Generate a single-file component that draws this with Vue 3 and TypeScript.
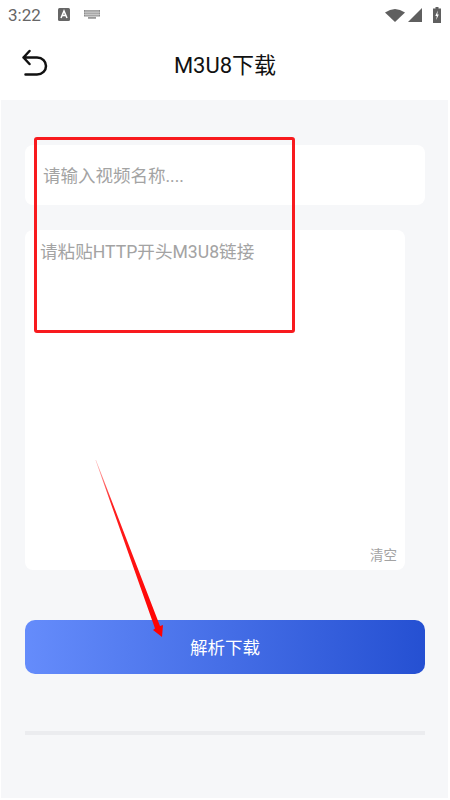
<script setup lang="ts">
const title: string = 'M3U8下载'
</script>

<template>
  <div class="page">
    <div class="status">
      <span class="time">3:22</span>
      <svg class="a-icon" width="12" height="13" viewBox="0 0 12 13">
        <rect x="0" y="0" width="12" height="13" rx="1.500" fill="#666" />
        <path d="M3 10 L6 3 L9 10 M4.200 7.600 H7.800" fill="none" stroke="#fff" stroke-width="1.500" />
      </svg>
      <svg class="kb-icon" width="16" height="9" viewBox="0 0 16 9">
        <rect x="0" y="0" width="16" height="6.500" fill="#8a8a8a" />
        <path d="M2 0V6.500M4 0V6.500M6 0V6.500M8 0V6.500M10 0V6.500M12 0V6.500M14 0V6.500M0 2.200H16M0 4.400H16" stroke="#e4e4e4" stroke-width=".6" />
        <rect x="4" y="7" width="8" height="1.800" fill="#999" />
      </svg>
      <span class="spacer"></span>
      <svg width="20" height="15" viewBox="0 0 20 15">
        <path d="M0 5.500 Q10 -1.500 20 5.500 L10 15 Z" fill="#5f5f5f" />
      </svg>
      <svg class="signal" width="14" height="14" viewBox="0 0 14 14">
        <path d="M14 0 V14 H0 Z" fill="#5f5f5f" />
      </svg>
      <svg class="battery" width="8" height="16" viewBox="0 0 8 16">
        <path d="M2.500 0 H5.500 V1.500 H8 V16 H0 V1.500 H2.500 Z" fill="#5f5f5f" />
        <path d="M4.800 3.500 L2.300 9 H3.800 L3.200 13 L5.800 7.500 H4.300 Z" fill="#fff" />
      </svg>
    </div>

    <header class="nav">
      <svg class="back" width="26" height="27" viewBox="0 0 26 27">
        <path d="M7.500 2 L1.500 8.500 L7.500 15 M1.500 8.500 H15 C20.500 8.500 24 12.500 24 17 C24 21.500 20.500 25.500 15 25.500 H3.500" fill="none" stroke="#111" stroke-width="2.500" stroke-linecap="round" stroke-linejoin="round" />
      </svg>
      <h1 class="title">{{ title }}</h1>
      <span></span>
    </header>

    <main class="content">
      <div class="name-field">请输入视频名称....</div>
      <div class="url-field">
        <div class="url-hint">请粘贴HTTP开头M3U8链接</div>
        <div class="clear">清空</div>
      </div>
      <button class="submit" type="button">解析下载</button>
      <div class="progress"></div>

      <div class="annot-box"></div>
      <svg class="annot-arrow" width="80" height="190" viewBox="0 0 80 190">
        <defs>
          <linearGradient id="arrowFade" gradientUnits="userSpaceOnUse" x1="9" y1="0" x2="75" y2="177">
            <stop offset="0" stop-color="#ff0000" stop-opacity="0.25" />
            <stop offset="0.25" stop-color="#ff2020" />
            <stop offset="1" stop-color="#ff0000" />
          </linearGradient>
        </defs>
        <path d="M9 0 L73 166 L76 165 L75 177 L66 170 L68 168.500 L8.500 0 Z" fill="url(#arrowFade)" />
      </svg>
    </main>
  </div>
</template>

<style>
html, body { margin: 0; padding: 0; background: #fff; }
</style>

<style scoped>
.page {
  width: 450px;
  height: 800px;
  display: flex;
  flex-direction: column;
  font-family: "Roboto", "Noto Sans CJK SC", sans-serif;
  overflow: hidden;
}
.status {
  height: 30px;
  display: flex;
  align-items: center;
  padding: 0 9px 1px 8px;
  box-sizing: border-box;
}
.time { font-size: 17px; color: #666; width: 50px; }
.kb-icon { margin-left: 14px; }
.spacer { flex: 1; }
.signal { margin-left: 3px; }
.battery { margin-left: 11px; }
.nav {
  height: 70px;
  display: grid;
  grid-template-columns: 1fr auto 1fr;
  align-items: center;
  box-sizing: border-box;
  padding-bottom: 5px;
}
.back { margin-left: 22px; }
.title {
  margin: 0;
  font-size: 22px;
  font-weight: 400;
  color: #111;
  font-family: "Roboto", "Noto Sans CJK SC", sans-serif;
}
.content {
  flex: 1;
  background: #f6f7f9;
  position: relative;
  margin: 0 2px 2px 1px;
  padding: 45px 0 0 24px;
  display: flex;
  flex-direction: column;
  align-items: flex-start;
}
.name-field {
  width: 400px;
  height: 60px;
  box-sizing: border-box;
  background: #fff;
  border-radius: 8px;
  padding: 0 0 2px 18px;
  display: flex;
  align-items: center;
  font-size: 17.500px;
  color: #a3a3a3;
}
.url-field {
  width: 380px;
  height: 340px;
  margin-top: 25px;
  box-sizing: border-box;
  background: #fff;
  border-radius: 8px;
  padding: 10px 8px 6px 15px;
  display: flex;
  flex-direction: column;
  justify-content: space-between;
}
.url-hint { font-size: 17.600px; color: #a3a3a3; line-height: 24px; }
.clear { align-self: flex-end; font-size: 13.500px; color: #a3a3a3; line-height: 18px; }
.submit {
  width: 400px;
  height: 54px;
  margin-top: 50px;
  border: 0;
  border-radius: 10px;
  background: linear-gradient(90deg, #658cfb 0%, #2550d2 100%);
  color: #fff;
  font-size: 17.500px;
  font-family: inherit;
  padding: 0 0 2px;
}
.progress {
  width: 400px;
  height: 4px;
  margin-top: 57px;
  background: #ebecef;
}
.annot-box {
  position: absolute;
  left: 33px;
  top: 37px;
  width: 261px;
  height: 196px;
  box-sizing: border-box;
  border: 3px solid #f81a1e;
  border-radius: 3px;
  pointer-events: none;
}
.annot-arrow {
  position: absolute;
  left: 86px;
  top: 360px;
  pointer-events: none;
}
</style>
